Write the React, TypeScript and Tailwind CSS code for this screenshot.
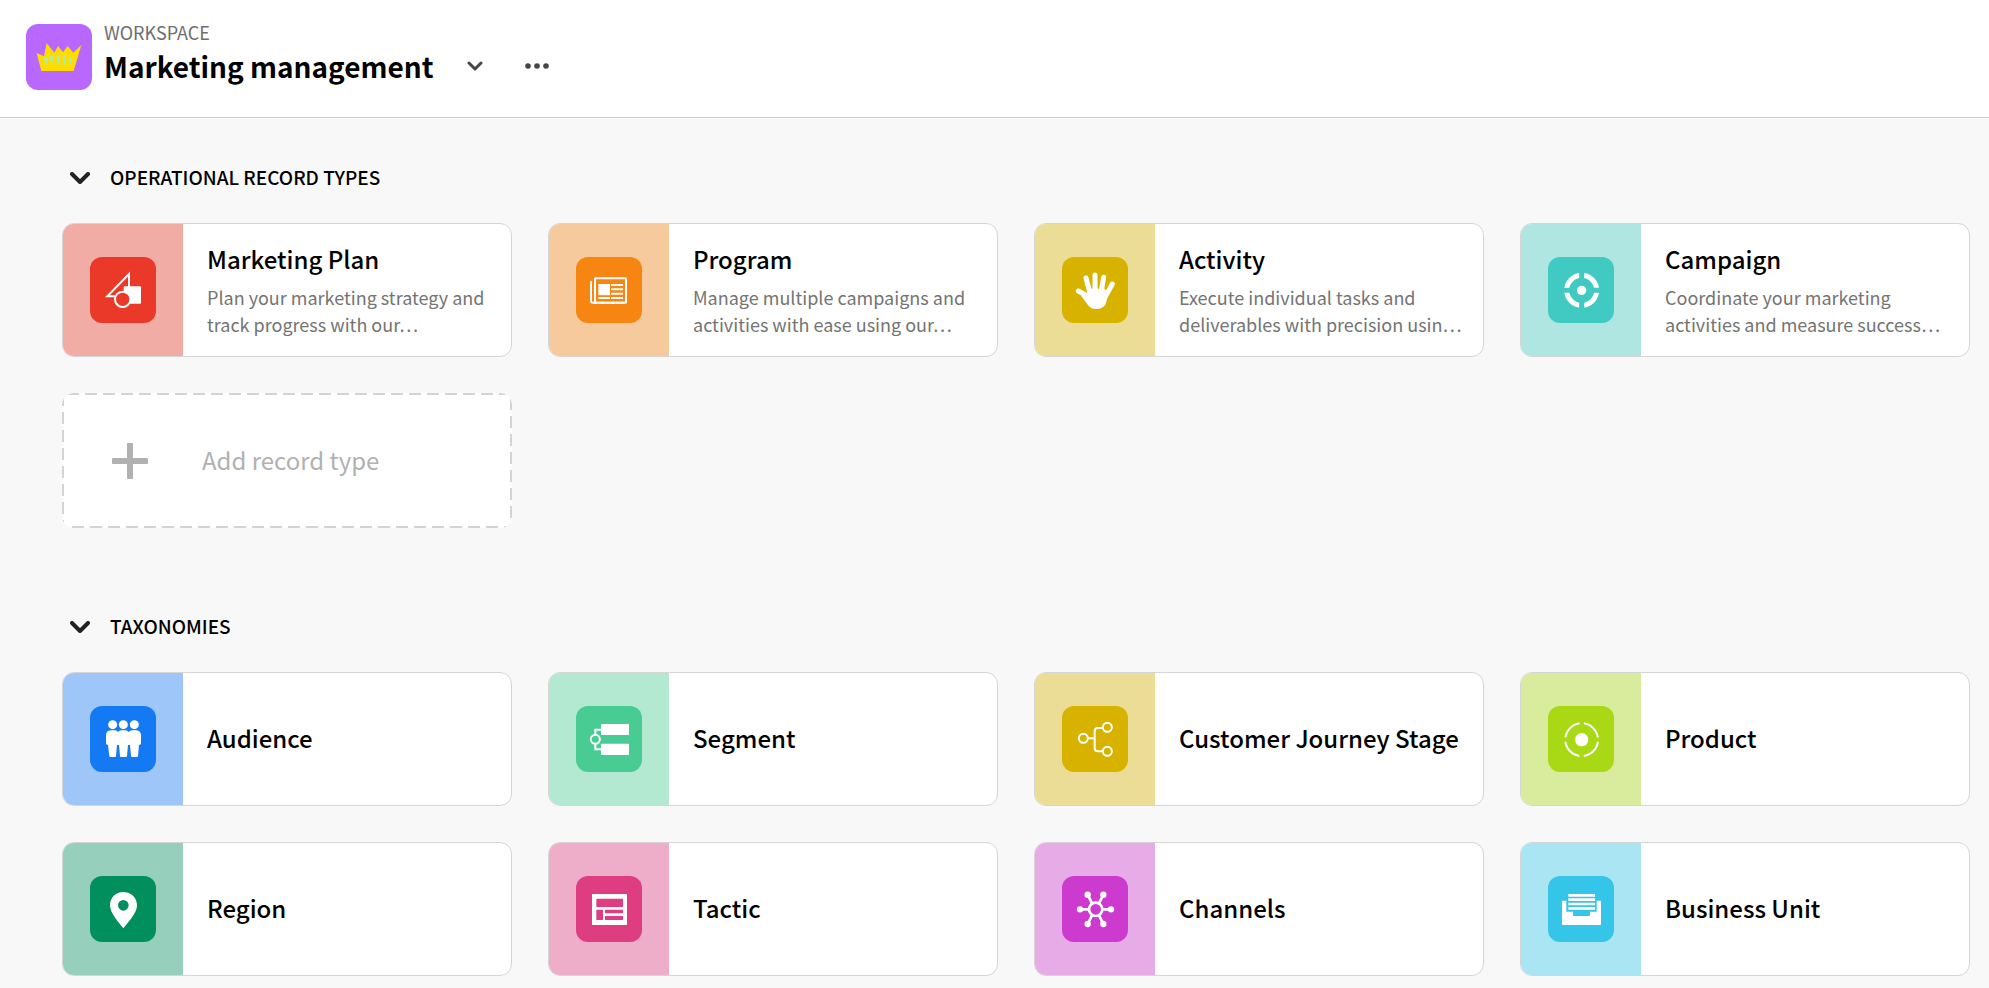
import { useState } from "react";
import type { ReactNode } from "react";

type RecordType = {
  name: string;
  description?: string;
  strip: string;
  tile: string;
  icon: ReactNode;
};

function Glyph({ children }: { children: ReactNode }) {
  return (
    <svg viewBox="0 0 198 198" className="size-full" fill="none" aria-hidden="true">
      {children}
    </svg>
  );
}

const shapes = (
  <Glyph>
    <path d="M80 118H52L117 51V90" stroke="#fff" strokeWidth="6" />
    <rect x="101" y="88" width="52" height="52" rx="3" fill="#fff" />
    <circle cx="98" cy="127" r="23" fill="#ea3829" stroke="#fff" strokeWidth="6" />
  </Glyph>
);

const news = (
  <Glyph>
    <rect x="57" y="64" width="93" height="73" rx="2" stroke="#fff" strokeWidth="6" />
    <path d="M45 74V131Q45 137 51 137H147" stroke="#fff" strokeWidth="6" strokeLinecap="round" />
    <path
      d="M67 81H102V115H67ZM105 81H141V87H105ZM105 94H141V100H105ZM105 107H141V113H105ZM67 120H102V126H67ZM105 120H141V126H105Z"
      fill="#fff"
    />
  </Glyph>
);

const hand = (
  <Glyph>
    <g stroke="#fff" strokeWidth="15" strokeLinecap="round">
      <path d="M49 102L82 120" />
      <path d="M72 63L84 108" />
      <path d="M99 54V108" />
      <path d="M125 61L117 108" />
      <path d="M151 81L128 122" />
    </g>
    <path
      d="M77 92L91 96 92 92H107L108 96 125 94 130 98 137 106Q137 124 132 138C128 150 116 156 101 156C88 156 82 150 76 142L58 117 73 113Q80 108 77 92Z"
      fill="#fff"
    />
  </Glyph>
);

const target = (
  <Glyph>
    <circle cx="101" cy="100" r="45" stroke="#fff" strokeWidth="15" />
    <path d="M101 40V160M41 100H161" stroke="#40cac1" strokeWidth="15" />
    <circle cx="101" cy="100" r="14" fill="#fff" />
  </Glyph>
);

const people = (
  <Glyph>
    <g fill="#fff">
      <circle cx="68" cy="56" r="13.5" />
      <circle cx="100" cy="56" r="13.5" />
      <circle cx="133" cy="56" r="13.5" />
      <path d="M62 73H76Q81 74 84 78Q88 73 94 73H107Q112 74 116 78Q120 74 126 73H139Q153 75 153 88V112Q153 117 147 117L144 151Q143 153 140 153H127Q123 153 123 150L120 117H114L111 150Q111 153 108 153H93Q90 153 90 150L87 117H81L78 150Q78 153 75 153H61Q58 153 58 150L54 117Q48 117 48 112V88Q48 75 62 73Z" />
    </g>
  </Glyph>
);

const segments = (
  <Glyph>
    <rect x="75" y="54" width="84" height="33" rx="2" fill="#fff" />
    <rect x="75" y="113" width="84" height="34" rx="2" fill="#fff" />
    <circle cx="58" cy="100" r="13.5" stroke="#fff" strokeWidth="6" />
    <path d="M77 71H58V86M58 114V130H77" stroke="#fff" strokeWidth="6" />
  </Glyph>
);

const journey = (
  <Glyph>
    <g stroke="#fff" strokeWidth="6">
      <circle cx="64" cy="97" r="13.5" />
      <circle cx="136" cy="64" r="13.5" />
      <circle cx="136" cy="136" r="13.5" />
      <path d="M78 97H98M122 66H108Q98 66 98 76V126Q98 136 108 136H122" />
    </g>
  </Glyph>
);

const product = (
  <Glyph>
    <circle cx="101" cy="101" r="49" stroke="#fff" strokeWidth="6" />
    <path d="M101 41V71M101 131V161M41 101H71M131 101H161" stroke="#a9d814" strokeWidth="13" />
    <circle cx="101" cy="101" r="20" fill="#fff" />
  </Glyph>
);

const pin = (
  <Glyph>
    <path
      fillRule="evenodd"
      d="M100 48C123 48 141 65 141 88C141 113 111 142 100 157C89 142 60 113 60 88C60 65 77 48 100 48ZM100 72A16 16 0 1 0 100 104A16 16 0 1 0 100 72Z"
      fill="#fff"
    />
  </Glyph>
);

const layout = (
  <Glyph>
    <path
      fillRule="evenodd"
      d="M50 54H151Q153 54 153 56V145Q153 147 151 147H50Q48 147 48 145V56Q48 54 50 54ZM61 68V93H141V68ZM61 101V132H81V101ZM87 101V112H141V101ZM87 120V132H141V120Z"
      fill="#fff"
    />
  </Glyph>
);

const hub = (
  <Glyph>
    <path
      d="M54 100H79M122 100H147M77 56L90 82M124 56L111 82M77 144L90 118M124 144L111 118"
      stroke="#fff"
      strokeWidth="8"
    />
    <circle cx="101" cy="100" r="20" stroke="#fff" strokeWidth="8" />
    <g fill="#fff">
      <circle cx="54" cy="100" r="9.5" />
      <circle cx="147" cy="100" r="9.5" />
      <circle cx="77" cy="56" r="9.5" />
      <circle cx="124" cy="56" r="9.5" />
      <circle cx="77" cy="144" r="9.5" />
      <circle cx="124" cy="144" r="9.5" />
    </g>
  </Glyph>
);

const tray = (
  <Glyph>
    <path
      d="M61 54H141V62H61ZM61 67H141V75H61ZM61 80H141V88H61ZM61 93H141V101H61ZM44 74H55V107H75V117Q75 120 78 120H123Q126 120 126 117V107H146V74H157Q159 74 159 76V145Q159 147 157 147H44Q42 147 42 145V76Q42 74 44 74Z"
      fill="#fff"
    />
  </Glyph>
);

const crown = (
  <Glyph>
    <path d="M32 87L54 97 62 57 85 86 96 66 111 85 125 66 142 86 166 63 143 141H46Z" fill="#ffdc00" />
    <path
      d="M53 100H65L62 125ZM71 97H83L77 125ZM91 97H103L97 125ZM110 97H121L115 125ZM129 100H140L132 125Z"
      fill="#a9edb5"
    />
  </Glyph>
);

const operational: RecordType[] = [
  {
    name: "Marketing Plan",
    description: "Plan your marketing strategy and\ntrack progress with our…",
    strip: "bg-[#f2aca6]",
    tile: "bg-[#ea3829]",
    icon: shapes,
  },
  {
    name: "Program",
    description: "Manage multiple campaigns and\nactivities with ease using our…",
    strip: "bg-[#f6ca9c]",
    tile: "bg-[#f68511]",
    icon: news,
  },
  {
    name: "Activity",
    description: "Execute individual tasks and\ndeliverables with precision usin…",
    strip: "bg-[#ebdd96]",
    tile: "bg-[#d7b300]",
    icon: hand,
  },
  {
    name: "Campaign",
    description: "Coordinate your marketing\nactivities and measure success…",
    strip: "bg-[#afe6e2]",
    tile: "bg-[#40cac1]",
    icon: target,
  },
];

const taxonomies: RecordType[] = [
  { name: "Audience", strip: "bg-[#9ec6f8]", tile: "bg-[#147af3]", icon: people },
  { name: "Segment", strip: "bg-[#b3e9d1]", tile: "bg-[#49cc93]", icon: segments },
  { name: "Customer Journey Stage", strip: "bg-[#ebdd96]", tile: "bg-[#d7b300]", icon: journey },
  { name: "Product", strip: "bg-[#d9ec9e]", tile: "bg-[#a9d814]", icon: product },
  { name: "Region", strip: "bg-[#96cfbb]", tile: "bg-[#008f5d]", icon: pin },
  { name: "Tactic", strip: "bg-[#eeaec9]", tile: "bg-[#de3d82]", icon: layout },
  { name: "Channels", strip: "bg-[#e7ace7]", tile: "bg-[#cd3ace]", icon: hub },
  { name: "Business Unit", strip: "bg-[#aae5f3]", tile: "bg-[#34c5e8]", icon: tray },
];

function RecordCard({ record }: { record: RecordType }) {
  return (
    <a
      href={"#" + record.name.toLowerCase().replace(/ /g, "-")}
      className="flex min-h-[134px] overflow-hidden rounded-xl border border-[#d5d5d5] bg-white"
    >
      <div className={`flex w-[120px] shrink-0 items-center justify-center ${record.strip}`}>
        <div className={`size-[66px] rounded-xl ${record.tile}`}>{record.icon}</div>
      </div>
      <div className="flex min-w-0 flex-col justify-center pl-6">
        <h3 className="pb-0.5 text-2xl leading-8 font-medium text-black">{record.name}</h3>
        {record.description && (
          <p className="mt-[7px] text-lg leading-[27px] whitespace-pre text-[#747474]">
            {record.description}
          </p>
        )}
      </div>
    </a>
  );
}

function Section({ title, children }: { title: string; children: ReactNode }) {
  const [open, setOpen] = useState(true);
  return (
    <section>
      <h2>
        <button
          type="button"
          aria-expanded={open}
          onClick={() => setOpen(!open)}
          className="flex items-center gap-5 pl-2 text-[19px] leading-[26px] font-medium text-black"
        >
          <svg viewBox="0 0 20 12" className={open ? "h-3 w-5" : "h-3 w-5 -rotate-90"} fill="none" aria-hidden="true">
            <path d="M2 2L10 10L18 2" stroke="#222" strokeWidth="4" strokeLinecap="round" strokeLinejoin="round" />
          </svg>
          <span className="pb-0.5">{title}</span>
        </button>
      </h2>
      {open && (
        <div className="mt-[31px] grid grid-cols-1 gap-9 sm:grid-cols-2 xl:grid-cols-4">{children}</div>
      )}
    </section>
  );
}

export default function App() {
  return (
    <div className="min-h-screen bg-[#f8f8f8] font-['Noto_Sans_CJK_SC','Noto_Sans',sans-serif]">
      <header className="flex items-start gap-3 border-b border-[#d0d0d0] bg-white px-[26px] pt-6 pb-[25px]">
        <div className="size-[66px] shrink-0 rounded-xl bg-[#b968ff]">{crown}</div>
        <div>
          <p className="text-lg leading-4 text-[#6e6e6e]">WORKSPACE</p>
          <div className="flex items-center">
            <h1 className="text-[28px] leading-[52px] font-bold text-black">Marketing management</h1>
            <button type="button" aria-label="Switch workspace" className="ml-8 flex size-5 items-center justify-center">
              <svg viewBox="0 0 16 10" className="h-[10px] w-4" fill="none" aria-hidden="true">
                <path d="M2 2L8 8L14 2" stroke="#464646" strokeWidth="3" strokeLinecap="round" strokeLinejoin="round" />
              </svg>
            </button>
            <button type="button" aria-label="More actions" className="ml-[38px] flex h-6 w-7 items-center justify-center">
              <svg viewBox="0 0 24 6" className="h-[6px] w-6" fill="#464646" aria-hidden="true">
                <circle cx="3" cy="3" r="2.8" />
                <circle cx="12" cy="3" r="2.8" />
                <circle cx="21" cy="3" r="2.8" />
              </svg>
            </button>
          </div>
        </div>
      </header>
      <main className="flex flex-col gap-[85px] pt-[46px] pr-[19px] pb-3 pl-[62px]">
        <Section title="OPERATIONAL RECORD TYPES">
          {operational.map((record) => (
            <RecordCard key={record.name} record={record} />
          ))}
          <button
            type="button"
            className="relative flex min-h-[135px] items-center gap-[54px] overflow-hidden rounded-xl bg-white pl-[50px] text-left text-2xl leading-8 text-[#b1b1b1]"
          >
            <svg className="absolute inset-0 size-full" fill="none" aria-hidden="true">
              <rect
                width="100%"
                height="100%"
                stroke="#d3d3d3"
                strokeWidth="4"
                strokeDasharray="12 6"
                strokeDashoffset="-5"
              />
            </svg>
            <svg viewBox="0 0 36 36" className="size-9 shrink-0" fill="#b1b1b1" aria-hidden="true">
              <rect x="15" width="6" height="36" rx="1" />
              <rect y="15" width="36" height="6" rx="1" />
            </svg>
            <span className="pb-0.5">Add record type</span>
          </button>
        </Section>
        <Section title="TAXONOMIES">
          {taxonomies.map((record) => (
            <RecordCard key={record.name} record={record} />
          ))}
        </Section>
      </main>
    </div>
  );
}
